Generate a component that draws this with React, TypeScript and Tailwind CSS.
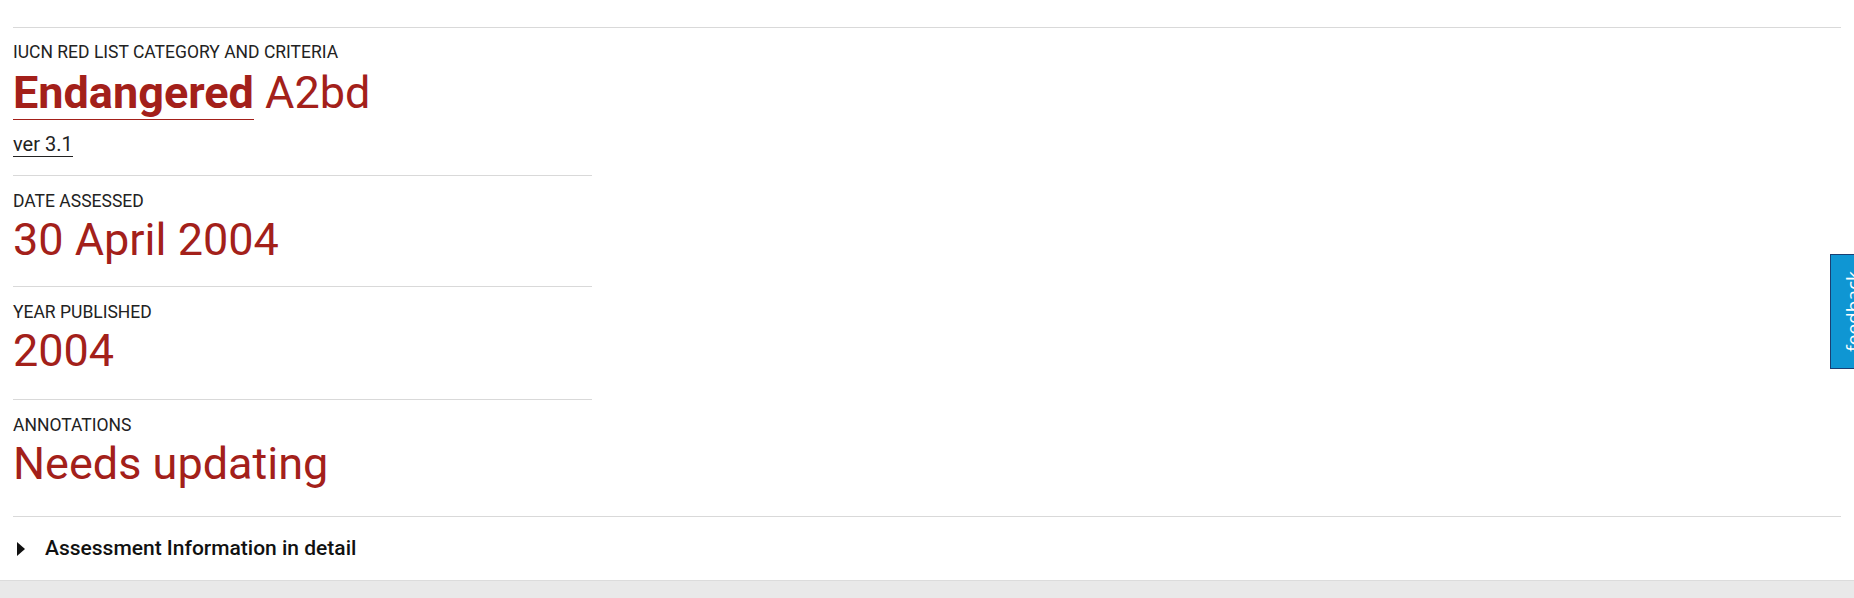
type Field = {
  label: string;
  value: string;
  space: string;
};

const fields: Field[] = [
  { label: "DATE ASSESSED", value: "30 April 2004", space: "pb-[19px]" },
  { label: "YEAR PUBLISHED", value: "2004", space: "pb-[21px]" },
  { label: "ANNOTATIONS", value: "Needs updating", space: "pb-[25px]" },
];

const App = () => {
  return (
    <div className="relative min-h-[598px] w-full overflow-hidden bg-white font-['Roboto',sans-serif]">
      <div className="px-[13px] pt-[27px]">
        <div className="border-t border-[#d9d9d9]">
          <div className="w-[579px]">
            <section className="pt-[12px] pb-[17px]">
              <p className="text-[17.5px] leading-6 text-[#222]">
                IUCN RED LIST CATEGORY AND CRITERIA
              </p>
              <p className="mt-[2px] text-[45px] leading-[1.2] text-[#a3201a]">
                <a href="#" className="border-b border-[#a3201a] font-bold">
                  Endangered
                </a>{" "}
                A2bd
              </p>
              <p className="mt-[10px] text-[20px] leading-7 text-[#222]">
                <a href="#" className="border-b border-[#222]">
                  ver 3.1
                </a>
              </p>
            </section>

            {fields.map((field) => (
              <section
                key={field.label}
                className={`border-t border-[#d9d9d9] pt-[13px] ${field.space}`}
              >
                <p className="text-[17.5px] leading-6 text-[#222]">
                  {field.label}
                </p>
                <p className="text-[45px] leading-[1.2] text-[#a3201a]">
                  {field.value}
                </p>
              </section>
            ))}
          </div>

          <details className="border-t border-[#d9d9d9]">
            <summary className="flex h-[63px] cursor-pointer list-none items-center gap-[20px] pl-[4px] text-[21px] font-medium text-[#111]">
              <span className="h-0 w-0 border-y-[7px] border-l-[8px] border-y-transparent border-l-[#111]" />
              Assessment Information in detail
            </summary>
          </details>
        </div>
      </div>

      <div className="h-[19px] border-t border-[#dcdcdc] bg-[#e9e9e9]" />

      {/* feedback tab hangs off the right edge */}
      <div className="absolute left-[1830px] top-[254px] flex h-[115px] w-[40px] items-center border border-[#1b3f73] bg-[#0f96d3] pl-[10px]">
        <span className="rotate-180 text-[19px] leading-6 text-white font-['Open_Sans',sans-serif] [writing-mode:vertical-rl]">
          feedback
        </span>
      </div>
    </div>
  );
};

export default App;
